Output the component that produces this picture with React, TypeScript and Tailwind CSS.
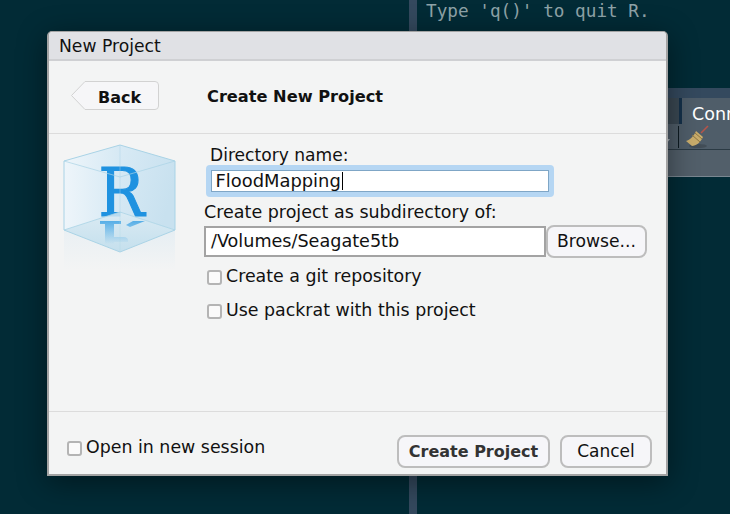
const sans = { fontFamily: '"DejaVu Sans", sans-serif' }

function CubeLogo() {
  return (
    <svg width="130" height="150" viewBox="0 0 130 150" className="block">
      <defs>
        <linearGradient id="rFill" x1="0" y1="0" x2="0.6" y2="1">
          <stop offset="0" stopColor="#1b8ad8" />
          <stop offset="0.5" stopColor="#2aa5ee" />
          <stop offset="1" stopColor="#1479cf" />
        </linearGradient>
        <linearGradient id="rMirror" gradientUnits="userSpaceOnUse" x1="0" y1="86" x2="0" y2="110">
          <stop offset="0" stopColor="#2f9ce3" stopOpacity="0.8" />
          <stop offset="1" stopColor="#3aa3e6" stopOpacity="0" />
        </linearGradient>
        <linearGradient id="leftFace" x1="0" y1="0" x2="1" y2="0">
          <stop offset="0" stopColor="#eef5fa" />
          <stop offset="1" stopColor="#d6e9f4" />
        </linearGradient>
        <linearGradient id="rightFace" x1="0" y1="0" x2="1" y2="0.4">
          <stop offset="0" stopColor="#d8eaf5" />
          <stop offset="1" stopColor="#c8e1ef" />
        </linearGradient>
        <linearGradient id="floor" x1="0" y1="0" x2="0" y2="1">
          <stop offset="0" stopColor="#d6e9f3" />
          <stop offset="1" stopColor="#bcdcec" />
        </linearGradient>
        <linearGradient id="fadeL" x1="0" y1="0" x2="0" y2="1">
          <stop offset="0" stopColor="#e6eef3" />
          <stop offset="1" stopColor="#f3f4f4" />
        </linearGradient>
      </defs>
      {/* faces */}
      <path d="M9 27 L65 11 L65 78 L9 96 Z" fill="url(#leftFace)" />
      <path d="M65 11 L120 27 L120 96 L65 78 Z" fill="url(#rightFace)" />
      <text
        x="66.5"
        y="82"
        textAnchor="middle"
        fontFamily='"DejaVu Serif", serif'
        fontSize="68"
        fill="#1f92e0"
        stroke="#1f92e0"
        strokeWidth="1.2"
        textLength="46"
        lengthAdjust="spacingAndGlyphs"
      >
        R
      </text>
      <path d="M9 96 L65 78 L120 96 L65 118 Z" fill="url(#floor)" opacity="0.85" />
      {/* reflection below the cube */}
      <path d="M9 96 L65 118 V136 H9 Z" fill="url(#fadeL)" opacity="0.7" />
      <path d="M65 118 L120 96 V136 H65 Z" fill="url(#fadeL)" />
      {/* mirrored strokes of the R on the floor */}
      <g fill="url(#rMirror)">
        <rect x="45" y="87" width="21" height="3" />
        <path d="M75 93 L90 87 H78 L71 91 Z" />
        <rect x="50" y="90" width="9" height="20" />
        <path d="M59 103 H68 Q74 103 73 108 H59 Z" />
      </g>
      {/* edges */}
      <g fill="none" stroke="#a9d3e6" strokeWidth="1">
        <path d="M9 27 L65 11 L120 27 V96 L65 118 L9 96 Z" />
        <path d="M9 27 L65 43 L120 27" opacity="0.7" />
        <path d="M65 11 V78" opacity="0.45" />
        <path d="M65 78 V118" opacity="0.3" />
        <path d="M9 96 L65 78 L120 96" opacity="0.8" />
      </g>
    </svg>
  )
}

function Broom() {
  return (
    <svg width="24" height="24" viewBox="0 0 24 24" className="block">
      <ellipse cx="13" cy="21" rx="9" ry="2" fill="#3d4750" opacity="0.7" />
      <path d="M16 8 L23 1" stroke="#b5544a" strokeWidth="1.6" />
      <path d="M11 6 L18 12 C16 17 11 21 7 21 L1 16 C5 15 9 11 11 6 Z" fill="#c9ad6c" />
      <path d="M7 10 L15 17 M10 8 L17 14" stroke="#8d7540" strokeWidth="1" />
    </svg>
  )
}

function Check({ label }: { label: string }) {
  return (
    <label className="flex h-[20px] items-center gap-[4px] text-[17.4px] leading-[18px] text-[#111]">
      <span className="h-[15px] w-[15px] rounded-[3px] border-2 border-[#b4b4b4] bg-[#fafafa]" />
      <span className="mb-[2px]">{label}</span>
    </label>
  )
}

export default function App() {
  return (
    <div className="relative flex h-[514px] w-[730px] overflow-hidden bg-[#022b36]" style={sans}>
      <div className="w-[409px]" />
      <div className="w-2 bg-[#34495e]" />
      <div className="flex-1">
        <div
          className="h-[88px] pl-[9px] text-[17.7px] leading-[23px] text-[#8fa3a8]"
          style={{ fontFamily: '"DejaVu Sans Mono", monospace' }}
        >
          Type 'q()' to quit R.
        </div>
        <div className="h-[10px] bg-[#34495e]" />
        <div className="flex h-[26px] justify-end bg-[#143049]">
          <div className="w-[262px] bg-[#3a4853]" />
          <div className="w-[3px]" />
          <div className="w-[48px] overflow-hidden bg-[#4f5d69] pl-[10px] text-[17.5px] font-medium leading-[33px] text-white">
            Connections
          </div>
        </div>
        <div className="flex h-[26px] items-center justify-end border-b border-[#2b3a44] bg-[#4f5d69]">
          <div className="mr-[8px] mt-[8px] h-0 w-0 border-x-[3px] border-t-[4px] border-x-transparent border-t-[#aab3ba]" />
          <div className="mr-[6px] h-[22px] w-px bg-[#0e1b22]" />
          <div className="mr-[21px]">
            <Broom />
          </div>
        </div>
        <div className="h-[27px] border-b border-[#7a8791] bg-[#525f6a]" />
      </div>

      {/* dialog */}
      <div className="absolute left-[47px] top-[31px] flex h-[445px] w-[621px] flex-col rounded-t-[5px] border-2 border-t border-[#a3a3a3] bg-[#f3f4f4] shadow-[0_6px_30px_rgba(0,0,0,0.45)]">
        <div className="flex h-[29px] items-center rounded-t-[4px] border-b-[2px] border-[#cfd0d3] bg-[#e0e1e5] pl-[10px] pt-[3px] text-[17.2px] text-[#111]">
          New Project
        </div>

        <div className="flex h-[73px] items-start border-b border-[#dcdcdc]">
          <button className="relative ml-[22px] mt-[20px] h-[29px] w-[87px] text-[16px] font-bold text-[#111]">
            <svg width="88" height="29" viewBox="0 0 88 29" className="absolute left-0 top-0">
              <path
                d="M0.5 14.5 L14 0.5 H84 Q87.5 0.5 87.5 4 V25 Q87.5 28.5 84 28.5 H14 Z"
                fill="#f6f6f8"
                stroke="#d2d2d2"
              />
            </svg>
            <span className="relative top-[2px] ml-[10px]">Back</span>
          </button>
          <div className="ml-[49px] mt-[24px] text-[16.2px] font-bold leading-[24px] text-[#111]">Create New Project</div>
        </div>

        <div className="flex h-[277px]">
          <div className="ml-[6px] w-[130px]">
            <CubeLogo />
          </div>
          <div className="ml-[19px] flex flex-col">
            <div className="ml-[6px] mt-[12px] text-[17.1px] leading-[19px] text-[#111]">Directory name:</div>
            <div className="ml-[2px] h-[32px] w-[348px] rounded-[4px] bg-[#b5d6f3] p-[5px]">
              <div className="flex h-[22px] items-center border-[1.5px] border-[#7fa6c6] bg-white pl-[3.5px] text-[17.9px] text-[#111]">
                FloodMapping
                <span className="ml-px h-[18px] w-px bg-black" />
              </div>
            </div>
            <div className="mt-[5px] text-[17.5px] leading-[20px] text-[#111]">Create project as subdirectory of:</div>
            <div className="mt-[3px] flex items-center">
              <div className="flex h-[31px] w-[342px] items-center border-2 border-[#a3a3a3] bg-white pl-[5px] text-[17.6px] text-[#111]">
                /Volumes/Seagate5tb
              </div>
              <button className="h-[33px] w-[101px] rounded-[8px] border-2 border-[#bdbdbd] bg-[#f6f6f9] text-[17.2px] text-[#111]">
                Browse...
              </button>
            </div>
            <div className="ml-[3px] mt-[9px]">
              <Check label="Create a git repository" />
            </div>
            <div className="ml-[3px] mt-[14px]">
              <Check label="Use packrat with this project" />
            </div>
          </div>
        </div>

        <div className="flex flex-1 items-start border-t border-[#dcdcdc]">
          <div className="ml-[18px] mt-[26px]">
            <Check label="Open in new session" />
          </div>
          <div className="ml-auto mr-[14px] mt-[23px] flex gap-[10px]">
            <button className="h-[33px] w-[153px] rounded-[8px] border-2 border-[#bdbdbd] bg-[#f6f6f9] text-[16px] font-bold text-[#333]">
              Create Project
            </button>
            <button className="h-[33px] w-[92px] rounded-[8px] border-2 border-[#bdbdbd] bg-[#f6f6f9] text-[17px] text-[#111]">
              Cancel
            </button>
          </div>
        </div>
      </div>
    </div>
  )
}
